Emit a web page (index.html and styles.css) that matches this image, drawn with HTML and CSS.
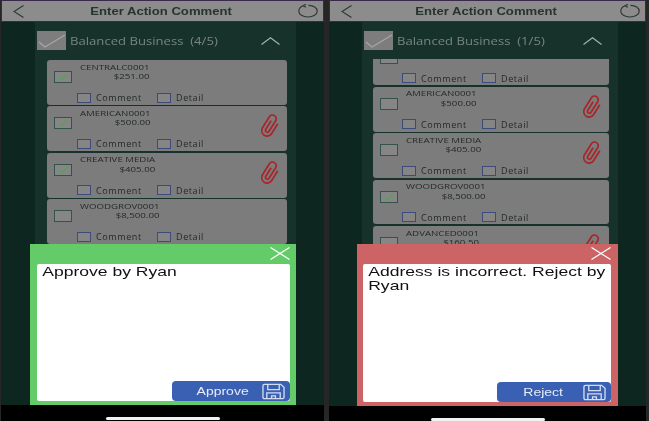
FILE: index.html
```html
<!DOCTYPE html>
<html lang="en">
<head>
    <meta charset="UTF-8">
    <title>Enter Action Comment</title>
    <link rel="stylesheet" href="styles.css">
</head>
<body>

<svg class="defs" width="0" height="0">
    <symbol id="clip" viewBox="0 0 18 24">
        <path transform="rotate(32 9 12)" d="M7.2 7v10a1.9 1.9 0 0 0 3.8 0V4.500a3.700 3.700 0 0 0-7.400 0V17.500a5.400 5.400 0 0 0 10.800 0V6" fill="none" stroke="#a82529" stroke-width="1.700"/>
    </symbol>
    <symbol id="save" viewBox="0 0 24 17">
        <path d="M2.500 1h17L23 4v10.500a1.500 1.500 0 0 1-1.500 1.500h-19A1.500 1.500 0 0 1 1 14.500v-12A1.500 1.500 0 0 1 2.500 1zM6 1v5.500h12V1M5 16V10h14v6M10 16v-3h4v3" fill="none" stroke="#d3dcf0" stroke-width="1.400"/>
    </symbol>
    <symbol id="tick" viewBox="0 0 16 10">
        <path d="M3.500 5L6.500 8L12.500 2" fill="none" stroke="#4fa553" stroke-width="1.200"/>
    </symbol>
</svg>

<div class="phone phone-approve">
    <div class="topbar">
        <svg class="back" viewBox="0 0 11 13"><path d="M10.500 .5L1 6.500l9.500 6" fill="none" stroke="#2c3a36" stroke-width="1.200"/></svg>
        <span class="topbar-title">Enter Action Comment</span>
        <svg class="refresh" viewBox="0 0 20 14"><path d="M5 1.800C2.500 2.800 .8 4.600 .8 7.200c0 3.300 4 5.800 9.200 5.800s9.200-2.500 9.200-5.800C19.200 4 15.500 1.400 10.500 1.300M8 .3l-3 1.500 3 1.400" fill="none" stroke="#2c3a36" stroke-width="1.200"/></svg>
    </div>
    <div class="content">
        <div class="section">
            <div class="section-check"><svg viewBox="0 0 29 19"><path d="M2 11l6 5L28 4" fill="none" stroke="#a6a6a6" stroke-width="1.300"/></svg></div>
            <span class="section-title">Balanced Business&nbsp; (4/5)</span>
            <svg class="chevron" viewBox="0 0 19 8"><path d="M.5 7.500L9.500 .8l9 6.700" fill="none" stroke="#a8b0ad" stroke-width="1.200"/></svg>
        </div>
        <div class="list">
            <div class="card">
                <div class="card-top">
                    <div class="check"><svg><use href="#tick"/></svg></div>
                    <div class="vendor"><div class="vendor-name">CENTRALC0001</div><div>$251.00</div></div>
                </div>
                <div class="options"><div class="option"><i></i>Comment</div><div class="option"><i></i>Detail</div></div>
            </div>
            <div class="card">
                <div class="card-top">
                    <div class="check"><svg><use href="#tick"/></svg></div>
                    <div class="vendor"><div class="vendor-name">AMERICAN0001</div><div>$500.00</div></div>
                    <svg class="clip"><use href="#clip"/></svg>
                </div>
                <div class="options"><div class="option"><i></i>Comment</div><div class="option"><i></i>Detail</div></div>
            </div>
            <div class="card">
                <div class="card-top">
                    <div class="check"><svg><use href="#tick"/></svg></div>
                    <div class="vendor"><div class="vendor-name">CREATIVE MEDIA</div><div>$405.00</div></div>
                    <svg class="clip"><use href="#clip"/></svg>
                </div>
                <div class="options"><div class="option"><i></i>Comment</div><div class="option"><i></i>Detail</div></div>
            </div>
            <div class="card">
                <div class="card-top">
                    <div class="check"></div>
                    <div class="vendor"><div class="vendor-name">WOODGROV0001</div><div>$8,500.00</div></div>
                </div>
                <div class="options"><div class="option"><i></i>Comment</div><div class="option"><i></i>Detail</div></div>
            </div>
        </div>
    </div>
    <div class="homebar"><span></span></div>

    <div class="popup">
        <div class="popup-head"><svg class="close" viewBox="0 0 20 13"><path d="M.5 .5l19 12M19.500 .5l-19 12" fill="none" stroke="#fff" stroke-width="1.200"/></svg></div>
        <div class="note">
            <p class="note-text">Approve by Ryan</p>
            <button class="action"><span>Approve</span><svg><use href="#save"/></svg></button>
        </div>
    </div>
</div>

<div class="phone phone-reject">
    <div class="topbar">
        <svg class="back" viewBox="0 0 11 13"><path d="M10.500 .5L1 6.500l9.500 6" fill="none" stroke="#2c3a36" stroke-width="1.200"/></svg>
        <span class="topbar-title">Enter Action Comment</span>
        <svg class="refresh" viewBox="0 0 20 14"><path d="M5 1.800C2.500 2.800 .8 4.600 .8 7.200c0 3.300 4 5.800 9.200 5.800s9.200-2.500 9.200-5.800C19.200 4 15.500 1.400 10.500 1.300M8 .3l-3 1.500 3 1.400" fill="none" stroke="#2c3a36" stroke-width="1.200"/></svg>
    </div>
    <div class="content">
        <div class="section">
            <div class="section-check"><svg viewBox="0 0 29 19"><path d="M2 11l6 5L28 4" fill="none" stroke="#a6a6a6" stroke-width="1.300"/></svg></div>
            <span class="section-title">Balanced Business&nbsp; (1/5)</span>
            <svg class="chevron" viewBox="0 0 19 8"><path d="M.5 7.500L9.500 .8l9 6.700" fill="none" stroke="#a8b0ad" stroke-width="1.200"/></svg>
        </div>
        <div class="list">
            <div class="list-scroll">
                <div class="card">
                    <div class="card-top">
                        <div class="check"></div>
                    </div>
                    <div class="options"><div class="option"><i></i>Comment</div><div class="option"><i></i>Detail</div></div>
                </div>
                <div class="card">
                    <div class="card-top">
                        <div class="check"></div>
                        <div class="vendor"><div class="vendor-name">AMERICAN0001</div><div>$500.00</div></div>
                        <svg class="clip"><use href="#clip"/></svg>
                    </div>
                    <div class="options"><div class="option"><i></i>Comment</div><div class="option"><i></i>Detail</div></div>
                </div>
                <div class="card">
                    <div class="card-top">
                        <div class="check"></div>
                        <div class="vendor"><div class="vendor-name">CREATIVE MEDIA</div><div>$405.00</div></div>
                        <svg class="clip"><use href="#clip"/></svg>
                    </div>
                    <div class="options"><div class="option"><i></i>Comment</div><div class="option"><i></i>Detail</div></div>
                </div>
                <div class="card">
                    <div class="card-top">
                        <div class="check"><svg><use href="#tick"/></svg></div>
                        <div class="vendor"><div class="vendor-name">WOODGROV0001</div><div>$8,500.00</div></div>
                    </div>
                    <div class="options"><div class="option"><i></i>Comment</div><div class="option"><i></i>Detail</div></div>
                </div>
                <div class="card">
                    <div class="card-top">
                        <div class="check"></div>
                        <div class="vendor"><div class="vendor-name">ADVANCED0001</div><div>$160.50</div></div>
                        <svg class="clip"><use href="#clip"/></svg>
                    </div>
                </div>
            </div>
        </div>
    </div>
    <div class="homebar"><span></span></div>

    <div class="popup">
        <div class="popup-head"><svg class="close" viewBox="0 0 20 13"><path d="M.5 .5l19 12M19.500 .5l-19 12" fill="none" stroke="#fff" stroke-width="1.200"/></svg></div>
        <div class="note">
            <p class="note-text">Address is incorrect. Reject by Ryan</p>
            <button class="action"><span>Reject</span><svg><use href="#save"/></svg></button>
        </div>
    </div>
</div>

</body>
</html>
```

FILE: styles.css
```css
body {
    margin: 0;
    padding-left: 1px;
    height: 421px;
    overflow: hidden;
    background: #262626;
    display: flex;
    gap: 5px;
    font-family: 'Liberation Sans', Arial, sans-serif;
}

.defs {
    position: absolute;
}

.phone {
    position: relative;
    display: flex;
    flex-direction: column;
    height: 421px;
    background: #0d2620;
    filter: blur(0.3px);
}

.phone-approve {
    width: 323px;
}

.phone-reject {
    width: 317px;
}

.topbar {
    flex: none;
    display: flex;
    align-items: center;
    justify-content: space-between;
    height: 20px;
    padding: 0 5px 0 11px;
    background: #8c8c8c;
    border: 1px solid #3a2948;
}

.back {
    width: 11px;
    height: 13px;
}

.refresh {
    width: 20px;
    height: 14px;
}

.topbar-title {
    font-size: 11.5px;
    font-weight: bold;
    color: #26332f;
    transform: scaleX(1.14);
}

.content {
    flex: 1;
    min-height: 0;
    display: flex;
    flex-direction: column;
    margin: 0 28px 0 34px;
    background: #17322a;
}

.phone-reject .content {
    margin-left: 33px;
}

.section {
    flex: none;
    display: flex;
    align-items: center;
    height: 19px;
    margin: 9px 0 10px;
    padding-left: 2px;
}

.phone-reject .section {
    margin-bottom: 9px;
}

.section-check {
    width: 29px;
    height: 19px;
    background: #7d7d7d;
}

.section-check svg {
    display: block;
}

.section-title {
    margin-left: 4px;
    font-family: 'Open Sans', sans-serif;
    font-size: 11.5px;
    white-space: nowrap;
    color: #78857f;
    transform: scaleX(1.14);
    transform-origin: left center;
}

.chevron {
    width: 19px;
    height: 8px;
    margin: 0 16px 0 auto;
}

.list {
    flex: 1;
    min-height: 0;
    overflow: hidden;
    padding: 0 9px 0 12px;
}

.phone-reject .list {
    padding-left: 11px;
}

.list-scroll {
    margin-top: -18.5px;
}

.card {
    height: 44.8px;
    margin-bottom: 1.6px;
    background: #7c7c7c;
    border-radius: 3px;
}

.card-top {
    display: flex;
    height: 31px;
    padding-left: 7px;
}

.check {
    flex: none;
    width: 16px;
    height: 10px;
    margin-top: 11px;
    background: #868686;
    border: 1.5px solid #33544a;
}

.check svg {
    display: block;
    width: 16px;
    height: 10px;
}

.vendor {
    margin: 1.5px 0 0 8px;
    font-family: 'Open Sans', sans-serif;
    font-size: 8px;
    line-height: 9.5px;
    text-align: right;
    white-space: nowrap;
    color: #232a28;
    transform: scaleX(1.21);
    transform-origin: left top;
}

.vendor-name {
    text-align: left;
}

.clip {
    width: 18px;
    height: 24px;
    margin: 8px 8px 0 auto;
}

.options {
    display: flex;
    padding-left: 30px;
}

.phone-reject .options {
    padding-left: 29px;
}

.option {
    display: flex;
    align-items: center;
    width: 80px;
    font-family: 'Open Sans', sans-serif;
    font-size: 9px;
    letter-spacing: 0.6px;
    color: #232a28;
}

.option i {
    width: 12px;
    height: 8px;
    margin-right: 5px;
    background: #858585;
    border: 1.3px solid #3f4a7c;
}

.popup {
    position: absolute;
    left: 29px;
    bottom: 16px;
    width: 266px;
    height: 161px;
    display: flex;
    flex-direction: column;
    box-sizing: border-box;
    padding: 0 6px 4px 7px;
    background: #63cb68;
}

.phone-reject .popup {
    left: 28px;
    bottom: 15px;
    width: 261px;
    height: 162px;
    padding: 0 7px 4px 6px;
    background: #cc6466;
}

.popup-head {
    flex: none;
    display: flex;
    justify-content: flex-end;
    height: 20px;
}

.close {
    width: 20px;
    height: 13px;
    margin-top: 3px;
}

.note {
    flex: 1;
    display: flex;
    flex-direction: column;
    justify-content: space-between;
    background: #fff;
    border-radius: 2px;
}

.note-text {
    margin: 0;
    padding: 1px 4px;
    font-size: 13.5px;
    line-height: 14px;
    color: #111;
    width: 190px;
    transform: scaleX(1.3);
    transform-origin: left top;
}

.action {
    align-self: flex-end;
    display: flex;
    align-items: center;
    justify-content: flex-end;
    width: 118px;
    height: 20px;
    padding: 0 5px 0 0;
    border: none;
    border-radius: 4px;
    background: #3a60b4;
    font-family: 'Liberation Sans', Arial, sans-serif;
    font-size: 10px;
    color: #e6ebf6;
}

.phone-reject .action {
    width: 114px;
}

.action span {
    margin-right: 21px;
    transform: scaleX(1.4);
}

.phone-reject .action span {
    margin-right: 26px;
}

.action svg {
    width: 23px;
    height: 17px;
}

.homebar {
    flex: none;
    display: flex;
    justify-content: center;
    height: 16px;
    background: #000;
}

.phone-reject .homebar {
    height: 15px;
}

.homebar span {
    width: 114px;
    height: 3px;
    margin-top: 12px;
    background: #f2f2f2;
    border-radius: 2px;
}
```
